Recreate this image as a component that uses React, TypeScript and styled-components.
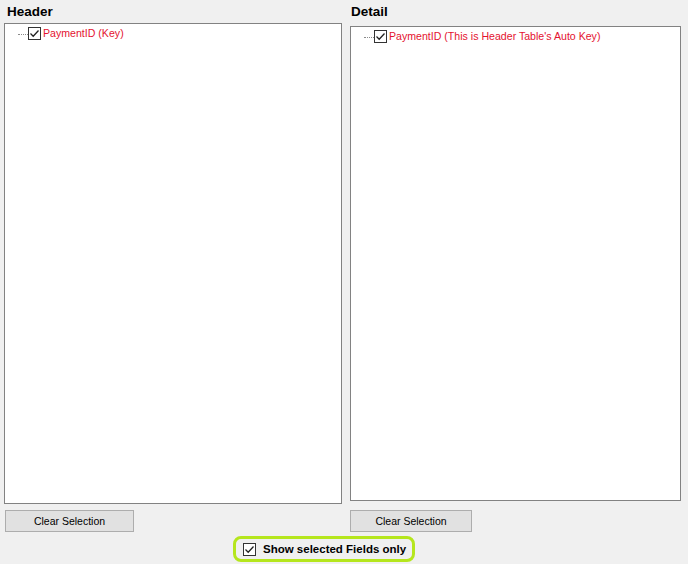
import React from "react";
import styled, { createGlobalStyle } from "styled-components";

const GlobalStyle = createGlobalStyle`
  html, body {
    margin: 0;
    padding: 0;
    background: #f0f0f0;
  }
  body {
    font-family: "Liberation Sans", Arial, sans-serif;
  }
`;

const Page = styled.div`
  width: 688px;
  height: 564px;
  background: #f0f0f0;
  display: flex;
  flex-direction: column;
  overflow: hidden;
`;

const Columns = styled.div`
  display: grid;
  grid-template-columns: 338px 331px;
  column-gap: 8px;
  padding-left: 4px;
`;

const Panel = styled.section`
  display: flex;
  flex-direction: column;
`;

const Title = styled.div<{ $height: number; $indent: number }>`
  height: ${(p) => p.$height}px;
  padding-left: ${(p) => p.$indent}px;
  box-sizing: border-box;
  padding-top: 4px;
  font-size: 13.5px;
  font-weight: bold;
  line-height: 15px;
  color: #000;
`;

const TreeBox = styled.div<{ $height: number }>`
  height: ${(p) => p.$height}px;
  box-sizing: border-box;
  background: #fff;
  border: 1px solid #828282;
  padding: 2px 0 0 13px;
`;

const TreeRow = styled.div`
  display: flex;
  align-items: center;
  height: 15px;
`;

const Connector = styled.span`
  width: 10px;
  height: 0;
  border-top: 1px dotted #8a8a8a;
  margin-top: 1px;
`;

const BoxMark = styled.span`
  width: 13px;
  height: 13px;
  box-sizing: border-box;
  border: 1px solid #333;
  background: #fff;
  display: inline-flex;
  align-items: center;
  justify-content: center;
  flex: none;
`;

const NodeLabel = styled.span`
  margin-left: 2px;
  font-size: 10.6px;
  color: #e4122f;
  white-space: nowrap;
  line-height: 13px;
`;

const Button = styled.button<{ $width: number; $top: number; $left: number }>`
  width: ${(p) => p.$width}px;
  height: 22px;
  margin-top: ${(p) => p.$top}px;
  margin-left: ${(p) => p.$left}px;
  background: #e1e1e1;
  border: 1px solid #adadad;
  font-family: "Liberation Sans", Arial, sans-serif;
  font-size: 10.5px;
  color: #000;
  padding: 0;
  cursor: default;
`;

const Footer = styled.div`
  padding-left: 233px;
  margin-top: 4px;
`;

const Highlight = styled.label`
  display: inline-flex;
  align-items: center;
  width: 182px;
  height: 26px;
  box-sizing: border-box;
  border: 3px solid #b5e61d;
  border-radius: 8px;
  padding-left: 7px;
  gap: 7px;
`;

const OptionText = styled.span`
  font-size: 11.5px;
  font-weight: bold;
  color: #000;
  white-space: nowrap;
`;

const Check = () => (
  <BoxMark>
    <svg width="11" height="11" viewBox="0 0 11 11">
      <polyline
        points="1.5,5.5 4.2,8.2 9.5,2.5"
        fill="none"
        stroke="#222"
        strokeWidth="1.3"
      />
    </svg>
  </BoxMark>
);

type TreePanelProps = {
  title: string;
  titleHeight: number;
  titleIndent: number;
  boxHeight: number;
  node: string;
  buttonWidth: number;
  buttonTop: number;
  buttonLeft: number;
};

const TreePanel = ({
  title,
  titleHeight,
  titleIndent,
  boxHeight,
  node,
  buttonWidth,
  buttonTop,
  buttonLeft,
}: TreePanelProps) => (
  <Panel>
    <Title $height={titleHeight} $indent={titleIndent}>
      {title}
    </Title>
    <TreeBox $height={boxHeight}>
      <TreeRow>
        <Connector />
        <Check />
        <NodeLabel>{node}</NodeLabel>
      </TreeRow>
    </TreeBox>
    <Button $width={buttonWidth} $top={buttonTop} $left={buttonLeft}>
      Clear Selection
    </Button>
  </Panel>
);

export default function App() {
  return (
    <Page>
      <GlobalStyle />
      <Columns>
        <TreePanel
          title="Header"
          titleHeight={23}
          titleIndent={3}
          boxHeight={481}
          node="PaymentID (Key)"
          buttonWidth={129}
          buttonTop={6}
          buttonLeft={1}
        />
        <TreePanel
          title="Detail"
          titleHeight={26}
          titleIndent={1}
          boxHeight={475}
          node="PaymentID (This is Header Table's Auto Key)"
          buttonWidth={122}
          buttonTop={9}
          buttonLeft={0}
        />
      </Columns>
      <Footer>
        <Highlight>
          <Check />
          <OptionText>Show selected Fields only</OptionText>
        </Highlight>
      </Footer>
    </Page>
  );
}
